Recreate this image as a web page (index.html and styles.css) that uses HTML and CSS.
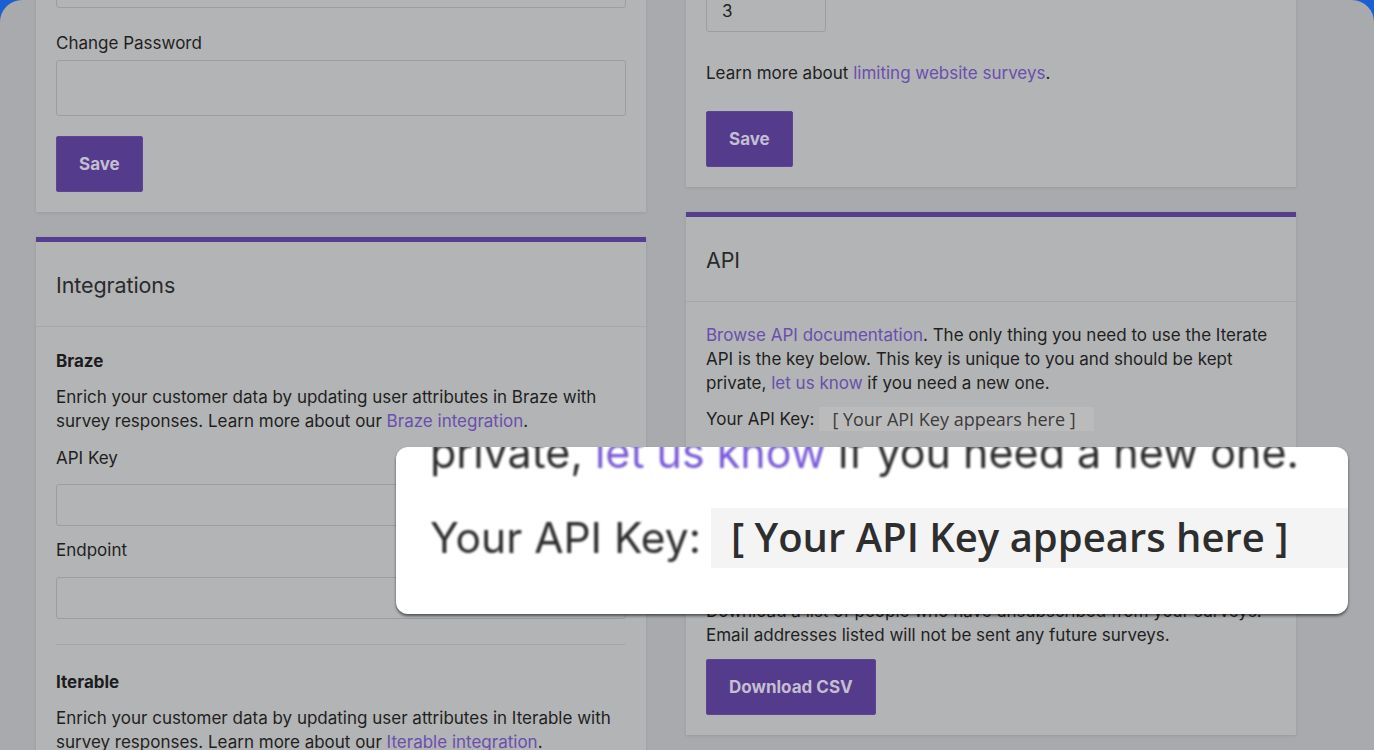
FILE: index.html
```html
<!DOCTYPE html>
<html lang="en">
<head>
<meta charset="utf-8">
<title>Settings</title>
<link rel="stylesheet" href="styles.css">
</head>
<body>
<div class="frame">
  <div class="columns">
    <div class="col col-left">
      <section class="card">
        <div class="card-body">
          <div class="field">
            <label class="label">Email</label>
            <input class="input" type="text">
          </div>
          <div class="field field-password">
            <label class="label label-tight">Change Password</label>
            <input class="input input-tall" type="password">
          </div>
          <button class="btn">Save</button>
        </div>
      </section>

      <section class="card card-accent">
        <header class="card-header">Integrations</header>
        <div class="card-body card-body-int">
          <h3 class="sub">Braze</h3>
          <p class="text">Enrich your customer data by updating user attributes in Braze with survey responses. Learn more about our <a class="link" href="#">Braze integration</a>.</p>
          <label class="label label-api">API Key</label>
          <input class="input input-api" type="text">
          <label class="label label-endpoint">Endpoint</label>
          <input class="input input-endpoint" type="text">
          <hr class="divider">
          <h3 class="sub">Iterable</h3>
          <p class="text">Enrich your customer data by updating user attributes in Iterable with survey responses. Learn more about our <a class="link" href="#">Iterable integration</a>.</p>
        </div>
      </section>
    </div>

    <div class="col col-right">
      <section class="card">
        <div class="card-body">
          <div class="field field-limit">
            <label class="label">Maximum website surveys per visitor</label>
            <input class="input input-small" type="text" value="3">
          </div>
          <p class="text text-learn">Learn more about <a class="link" href="#">limiting website surveys</a>.</p>
          <button class="btn">Save</button>
        </div>
      </section>

      <section class="card card-accent">
        <header class="card-header">API</header>
        <div class="card-body card-body-api">
          <p class="text"><a class="link" href="#">Browse API documentation</a>. The only thing you need to use the Iterate API is the key below. This key is unique to you and should be kept private, <a class="link" href="#">let us know</a> if you need a new one.</p>
          <div class="key-row">
            <span class="key-label">Your API Key:</span>
            <span class="key-box">[ Your API Key appears here ]</span>
          </div>
        </div>
      </section>

      <section class="card card-accent">
        <header class="card-header">Unsubscribes</header>
        <div class="card-body card-body-unsub">
          <p class="text">Download a list of people who have unsubscribed from your surveys.<br>Email addresses listed will not be sent any future surveys.</p>
          <button class="btn btn-wide">Download CSV</button>
        </div>
      </section>
    </div>
  </div>

  <div class="callout">
    <p class="zoom-line">private, <span class="zoom-link">let us know</span> if you need a new one.</p>
    <div class="zoom-row">
      <span class="zoom-label">Your API Key:</span>
      <span class="zoom-key">[ Your API Key appears here ]</span>
    </div>
  </div>
</div>
</body>
</html>
```

FILE: styles.css
```css
* { box-sizing: border-box; }

html, body {
  margin: 0;
  padding: 0;
}

body {
  background: #1b5fd1;
  font-family: "Inter", "Roboto", "Liberation Sans", sans-serif;
  color: #1e1e20;
  width: 1374px;
  height: 750px;
  overflow: hidden;
}

.frame {
  position: relative;
  width: 1374px;
  height: 750px;
  background: #a9aaad;
  border-radius: 22px 22px 0 0;
  overflow: hidden;
}

.columns {
  display: flex;
  align-items: flex-start;
  gap: 40px;
  padding-left: 36px;
}

.col {
  width: 610px;
  display: flex;
  flex-direction: column;
  gap: 25px;
}

.col-left { margin-top: -84px; }
.col-right { margin-top: -60px; }

.card {
  background: #b3b4b6;
  box-shadow: 0 1px 3px rgba(0, 0, 0, 0.10);
}

.card-accent {
  border-top: 5px solid #573d8f;
}

.card-header {
  height: 85px;
  padding: 29px 20px 0;
  font-size: 21.5px;
  line-height: 28px;
  font-weight: 400;
  color: #2a2a2c;
  border-bottom: 1px solid #a6a7a9;
  letter-spacing: -0.1px;
}

.card-body {
  padding: 20px;
}

.card-body-int { padding-top: 22px; }
.card-body-api { padding-top: 21px; padding-bottom: 31px; }
.card-body-unsub { padding-top: 22px; }

.field { margin-bottom: 23px; }
.field-password { margin-bottom: 20px; }
.field-limit { margin-bottom: 29px; }

.label {
  display: block;
  font-size: 17px;
  line-height: 24px;
  margin-bottom: 6px;
  color: #1f1f21;
}

.label-tight { margin-bottom: 5px; }
.label-api { margin-bottom: 14px; }
.label-endpoint { margin-bottom: 15px; }

.input {
  display: block;
  width: 100%;
  height: 42px;
  margin: 0;
  padding: 0 15px;
  background: #b3b4b6;
  border: 1px solid #9c9da0;
  border-radius: 3px;
  font-family: inherit;
  font-size: 17px;
  color: #1f1f21;
  outline: none;
}

.input-tall { height: 56px; }
.input-api { margin-bottom: 12px; }
.input-endpoint { margin-bottom: 25px; }
.input-small { width: 120px; }

.divider {
  border: 0;
  border-top: 1px solid #a6a7a9;
  margin: 0 0 25px;
  height: 0;
}

.sub {
  margin: 0 0 12px;
  font-size: 17px;
  line-height: 24px;
  font-weight: 700;
  color: #1c1c1e;
}

.text {
  margin: 0 0 13px;
  font-size: 17px;
  line-height: 24px;
  color: #1f1f21;
}

.text-learn { margin-bottom: 26px; }
.card-body-api .text { margin-bottom: 12px; }
.card-body-unsub .text { margin-bottom: 12px; }

.link {
  color: #6a4fad;
  text-decoration: none;
}

.btn {
  display: block;
  height: 56px;
  padding: 0 22px;
  border: 1px solid #5d4594;
  border-radius: 2px;
  background: #553b8b;
  color: #c4bed2;
  font-family: inherit;
  font-size: 17px;
  font-weight: 700;
  cursor: pointer;
}

.btn-wide { padding: 0 22px; }

.key-row {
  display: flex;
  align-items: center;
  height: 24px;
}

.key-label {
  font-size: 17px;
  line-height: 24px;
  color: #1f1f21;
}

.key-box {
  margin-left: 5px;
  height: 24px;
  padding: 0 18px 0 13px;
  background: #bbbbbc;
  font-family: "Open Sans", "Noto Sans", sans-serif;
  font-size: 18px;
  line-height: 24px;
  color: #3b3b3c;
}

/* magnified callout */
.callout {
  position: absolute;
  left: 396px;
  top: 447px;
  width: 952px;
  height: 167px;
  background: #ffffff;
  border-radius: 12px;
  box-shadow: 0 2px 3px rgba(0, 0, 0, 0.55);
  overflow: hidden;
}

.zoom-line {
  margin: -19px 0 0;
  padding-left: 34px;
  font-size: 43px;
  line-height: 48px;
  color: #2c2c2e;
  white-space: nowrap;
  filter: blur(0.9px);
}

.zoom-link { color: #7b5bd8; }

.zoom-row {
  display: flex;
  align-items: center;
  margin-top: 32px;
  padding-left: 34px;
  height: 60px;
}

.zoom-label {
  font-size: 42.5px;
  line-height: 60px;
  color: #2c2c2e;
  white-space: nowrap;
  filter: blur(0.9px);
}

.zoom-key {
  flex: 1;
  margin-left: 10px;
  height: 60px;
  padding-left: 20px;
  background: #f4f4f4;
  font-family: "Open Sans", "Noto Sans", sans-serif;
  font-weight: 600;
  font-size: 40px;
  line-height: 58px;
  color: #2e2e2e;
  white-space: nowrap;
}
```
